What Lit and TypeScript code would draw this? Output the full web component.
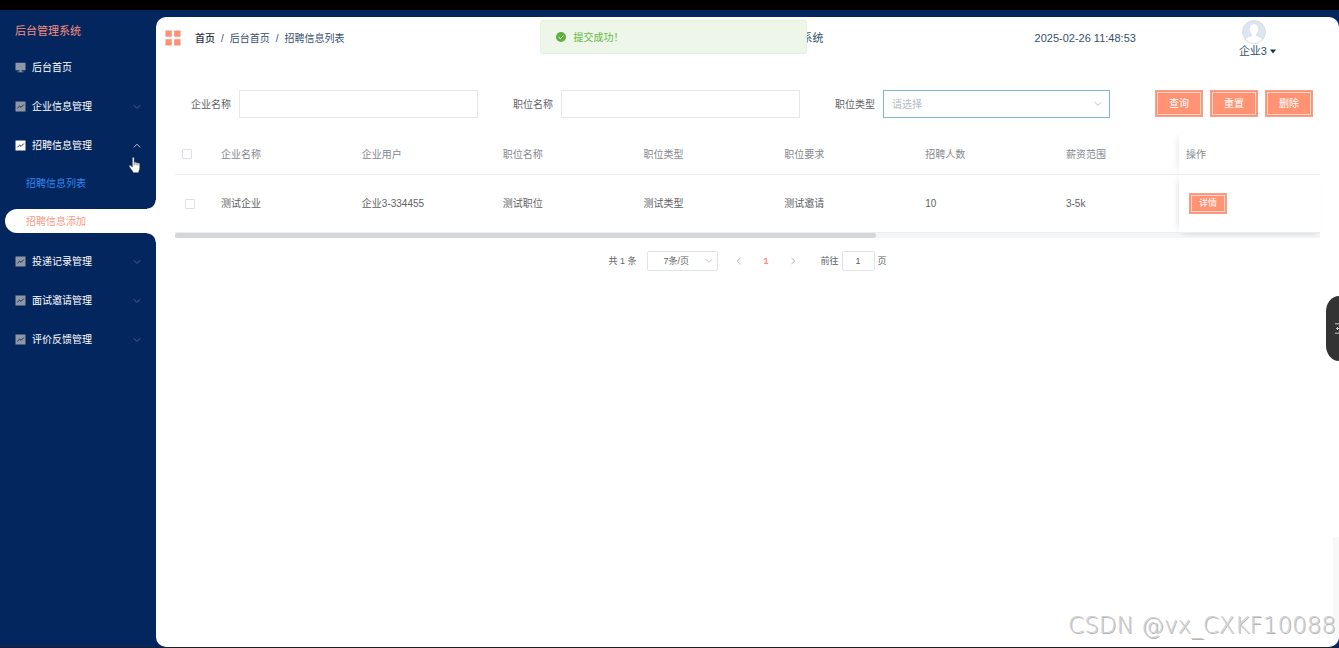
import { LitElement, html, css, svg } from "lit";
import { customElement, state } from "lit/decorators.js";

interface MenuEntry {
  label: string;
  icon: "monitor" | "chart";
  open?: boolean;
  children?: { label: string; active?: boolean }[];
}

const MENU: MenuEntry[] = [
  { label: "后台首页", icon: "monitor" },
  { label: "企业信息管理", icon: "chart", children: [] },
  {
    label: "招聘信息管理",
    icon: "chart",
    open: true,
    children: [{ label: "招聘信息列表" }, { label: "招聘信息添加", active: true }],
  },
  { label: "投递记录管理", icon: "chart", children: [] },
  { label: "面试邀请管理", icon: "chart", children: [] },
  { label: "评价反馈管理", icon: "chart", children: [] },
];

const COLUMNS = ["企业名称", "企业用户", "职位名称", "职位类型", "职位要求", "招聘人数", "薪资范围"];
const ROWS = [["测试企业", "企业3-334455", "测试职位", "测试类型", "测试邀请", "10", "3-5k"]];

const chevron = (d: string) => html`<svg class="chevron" viewBox="0 0 8 8" width="8" height="8" aria-hidden="true">
  <path d=${d} fill="none" stroke="currentColor" stroke-width="0.9" />
</svg>`;
const DOWN = "M0.8 2.2 L4 5.4 L7.2 2.2";
const UP = "M0.8 5.4 L4 2.2 L7.2 5.4";
const LEFT = "M5.5 0.8 L2.3 4 L5.5 7.2";
const RIGHT = "M2.5 0.8 L5.7 4 L2.5 7.2";

@customElement("side-menu")
export class SideMenu extends LitElement {
  static styles = css`
    :host { display: block; font-size: 10px; color: #fff; }
    .logo { padding: 13px 15px 9px; font-size: 11px; line-height: 16px; font-weight: 400; margin: 0; color: #f98d7c; }
    ul { list-style: none; margin: 0; padding: 0; }
    a { color: inherit; text-decoration: none; }
    .item { display: flex; align-items: center; height: 39px; padding: 0 15px; }
    .item .icon { width: 11px; height: 11px; margin-right: 6px; color: #8f97a5; }
    .item.open .icon { color: #fff; }
    .item .chevron { margin-left: auto; color: #536a92; }
    .item.open .chevron { color: #c5cede; }
    .sub { display: flex; flex-direction: column; padding-bottom: 9px; }
    .sub a { display: block; line-height: 38px; padding-left: 26px; color: #2f86f2; }
    .sub a.active {
      position: relative;
      margin: 6px 0 0 5px;
      padding: 2px 0 0 21px;
      line-height: 22px;
      color: #fb9a85;
      background: #fff;
      border-radius: 12px 0 0 12px;
    }
    .sub a.active::before, .sub a.active::after {
      content: "";
      position: absolute;
      right: 0;
      width: 9px;
      height: 9px;
    }
    .sub a.active::before { bottom: 100%; background: radial-gradient(circle at 0 0, transparent 8px, #fff 9px); }
    .sub a.active::after { top: 100%; background: radial-gradient(circle at 0 100%, transparent 8px, #fff 9px); }
  `;

  private icon(kind: string) {
    return html`<svg class="icon" viewBox="0 0 11 11" aria-hidden="true">
      ${kind === "monitor"
        ? svg`<path d="M0.5 0.8h10v7.4h-10z M4.5 8.2h2v1.4h-2z M2.5 9.4h6v0.9h-6z" fill="currentColor" />`
        : svg`<path d="M0.5 0.5h10v10h-10z" fill="currentColor" />
            <path d="M2.3 7.4 L4.6 5.1 L6.1 6.3 L8.8 3.6" fill="none" stroke="#04265e" stroke-width="0.9" />`}
    </svg>`;
  }

  render() {
    return html`
      <h1 class="logo">后台管理系统</h1>
      <nav>
        <ul>
          ${MENU.map(
            (m) => html`<li>
              <a class="item ${m.open ? "open" : ""}" href="#">
                ${this.icon(m.icon)}<span>${m.label}</span>
                ${m.children ? chevron(m.open ? UP : DOWN) : ""}
              </a>
              ${m.open
                ? html`<div class="sub">
                    ${m.children!.map((c) => html`<a class=${c.active ? "active" : ""} href="#">${c.label}</a>`)}
                  </div>`
                : ""}
            </li>`
          )}
        </ul>
      </nav>
    `;
  }
}

@customElement("app-root")
export class AppRoot extends LitElement {
  @state() private message = "提交成功！";

  static styles = css`
    :host {
      display: block;
      font-family: "Liberation Sans", "Noto Sans CJK SC", sans-serif;
      font-size: 10px;
      line-height: 15px;
      color: #606266;
    }
    * { box-sizing: border-box; }
    input, select, button { font: inherit; color: inherit; margin: 0; }
    .shell {
      position: relative;
      display: grid;
      grid-template-columns: 156px minmax(0, 1fr);
      min-height: 100vh;
      background: #04265e;
      border-top: 10px solid #000;
      border-bottom: 1px solid #1c1f26;
      overflow: hidden;
    }
    .page { margin-top: 7px; background: #fff; border-radius: 10px; }

    .header { display: flex; align-items: center; height: 42px; padding: 0 63px 0 9px; font-size: 11px; color: #35506c; }
    .grid-icon { width: 16px; height: 16px; margin-right: 14px; }
    .crumbs { display: flex; align-items: baseline; gap: 6px; font-size: 10px; }
    .crumbs a { color: inherit; text-decoration: none; }
    .crumbs .home { color: #1f3247; font-weight: 500; }
    .title { margin-left: auto; }
    .time { margin-left: 19%; }
    .user { display: flex; flex-direction: column; margin-left: 103px; padding: 0; border: 0; background: none; }
    .user .avatar { width: 26px; height: 26px; margin-left: 2px; }
    .user .name { display: flex; align-items: center; gap: 3px; line-height: 12px; }

    .content { padding: 31px 19px 0; }
    .search { display: flex; gap: 35px; padding: 0 7px 0 16px; }
    .field { display: flex; align-items: center; gap: 8px; flex: 287 1 0; min-width: 0; }
    .field.type { flex-grow: 275; }
    .field label { flex: none; }
    .field input, .field select {
      width: 100%;
      min-width: 0;
      height: 28px;
      padding: 0 8px;
      border: 1px solid #e4e8eb;
      border-radius: 0;
      background: #fff;
      outline: 0;
    }
    .picker { position: relative; flex: 1; min-width: 0; display: flex; }
    .picker select { appearance: none; width: 100%; background: #fff; outline: 0; }
    .picker .chevron { position: absolute; right: 8px; top: 50%; margin-top: -4px; color: #b4bac4; pointer-events: none; }
    .field .picker select { border-color: #7db7dd; color: #b4bac4; }
    .actions { display: flex; gap: 7px; margin-left: 10px; }
    .btn {
      width: 48px;
      height: 27px;
      padding: 0;
      border: 1px solid #f5a08b;
      background: #ff9374;
      color: #fff;
      outline: 1px solid #ffd3c6;
      outline-offset: -3px;
    }
    .btn.small { width: 38px; height: 21px; font-size: 9px; }

    .table { width: 100%; margin-top: 16px; border-collapse: separate; border-spacing: 0; table-layout: fixed; }
    .table th, .table td { padding: 0 7px; text-align: left; font-weight: 400; border-bottom: 1px solid #ebeef3; }
    .table th { height: 41px; color: #85888e; }
    .table td { height: 58px; }
    .col-check { width: 39px; }
    .col-data { width: 12.3%; }
    .col-op { width: 141px; }
    .table td:first-child { padding-left: 10px; }
    .table .op { position: relative; background: #fff; box-shadow: -5px 0 7px -4px rgba(0, 0, 0, 0.1); }
    .table td.op { padding-left: 10px; box-shadow: -5px 0 7px -4px rgba(0, 0, 0, 0.1), 0 4px 5px -3px rgba(0, 0, 0, 0.1); }
    .check {
      appearance: none;
      display: block;
      width: 10px;
      height: 10px;
      border: 1px solid #dcdfe6;
      border-radius: 1px;
      background: #fff;
    }
    .track { height: 5px; background: #f4f5f7; }
    .thumb { width: 61.2%; height: 5px; border-radius: 3px; background: #d5d6d9; }

    .pager { display: flex; justify-content: center; align-items: center; height: 20px; margin-top: 13px; font-size: 9px; }
    .pager .picker { flex: none; width: 71px; margin: 0 7px 0 11px; }
    .pager .picker select { height: 20px; padding: 0 0 0 15px; border: 1px solid #e0e3e9; border-radius: 2px; }
    .pager .picker .chevron { right: 5px; }
    .pager button { display: flex; align-items: center; justify-content: center; width: 27px; height: 20px; padding: 0; border: 0; background: none; color: #a9aeb8; }
    .pager .current { color: #f98c74; font-weight: 700; }
    .pager .goto { display: flex; align-items: center; gap: 3px; margin-left: 14px; }
    .pager input { width: 33px; height: 20px; padding: 0; text-align: center; border: 1px solid #e0e3e9; border-radius: 2px; outline: 0; }

    .toast {
      position: absolute;
      top: 10px;
      left: calc(40% + 4px);
      width: 20%;
      height: 34px;
      display: flex;
      align-items: center;
      gap: 8px;
      padding-left: 15px;
      border: 1px solid #e1f3d8;
      border-radius: 3px;
      background: #edf6e8;
      color: #67b944;
    }
    .dock {
      position: absolute;
      right: 0;
      top: 286px;
      width: 13px;
      height: 65px;
      display: flex;
      align-items: center;
      justify-content: flex-end;
      background: #333;
      border-radius: 20px 0 0 20px / 24px 0 0 24px;
    }
    .rail { position: absolute; right: 0; bottom: 8px; width: 6px; height: 102px; background: #f8f8f8; }
    .watermark {
      position: absolute;
      right: 3px;
      bottom: 4px;
      font-family: "DejaVu Sans", sans-serif;
      font-weight: 200;
      font-size: 23px;
      line-height: 36px;
      color: #d0d0d0;
      text-shadow: 1px 1px 0 #b4b4b4;
      white-space: nowrap;
    }
    .pointer { position: absolute; left: 128px; top: 147px; width: 14px; height: 17px; }
  `;

  render() {
    return html`
      <div class="shell">
        <side-menu></side-menu>
        <main class="page">
          <header class="header">
            <svg class="grid-icon" viewBox="0 0 16 16" aria-hidden="true">
              <path d="M0.5 0.5h6.3v6.3h-6.3z M9.2 0.5h6.3v6.3h-6.3z M0.5 9.2h6.3v6.3h-6.3z M9.2 9.2h6.3v6.3h-6.3z" fill="#fd8f74" />
            </svg>
            <nav class="crumbs">
              <a class="home" href="#">首页</a><span>/</span><a href="#">后台首页</a><span>/</span><span>招聘信息列表</span>
            </nav>
            <span class="title">招聘系统</span>
            <time class="time">2025-02-26 11:48:53</time>
            <button class="user" type="button">
              <svg class="avatar" viewBox="0 0 26 26" aria-hidden="true">
                <defs><clipPath id="round"><circle cx="13" cy="13" r="11" /></clipPath></defs>
                <circle cx="13" cy="13" r="11.5" fill="#dde5f2" stroke="#dcdcdf" />
                <g clip-path="url(#round)" fill="#fff">
                  <ellipse cx="13" cy="10.3" rx="4.2" ry="5.3" />
                  <path d="M11 14h4v3c3 1 6 2 6.500 4v5h-17v-5c0.500-2 3.500-3 6.500-4z" />
                </g>
              </svg>
              <span class="name">企业3
                <svg viewBox="0 0 6 5" width="6" height="5" aria-hidden="true"><path d="M0 0.500h6L3 4.500z" fill="#1f3247" /></svg>
              </span>
            </button>
          </header>

          <section class="content">
            <form class="search">
              <div class="field"><label for="company">企业名称</label><input id="company" type="text" /></div>
              <div class="field"><label for="job">职位名称</label><input id="job" type="text" /></div>
              <div class="field type">
                <label for="type">职位类型</label>
                <div class="picker">
                  <select id="type"><option>请选择</option></select>
                  ${chevron(DOWN)}
                </div>
              </div>
              <div class="actions">
                <button class="btn" type="button">查询</button>
                <button class="btn" type="button">重置</button>
                <button class="btn" type="button">删除</button>
              </div>
            </form>

            <table class="table">
              <colgroup>
                <col class="col-check" />
                ${COLUMNS.map((_, i) => html`<col class=${i < COLUMNS.length - 1 ? "col-data" : ""} />`)}
                <col class="col-op" />
              </colgroup>
              <thead>
                <tr>
                  <th><input class="check" type="checkbox" aria-label="全选" /></th>
                  ${COLUMNS.map((c) => html`<th>${c}</th>`)}
                  <th class="op">操作</th>
                </tr>
              </thead>
              <tbody>
                ${ROWS.map(
                  (r) => html`<tr>
                    <td><input class="check" type="checkbox" aria-label=${r[0]} /></td>
                    ${r.map((v) => html`<td>${v}</td>`)}
                    <td class="op"><button class="btn small" type="button">详情</button></td>
                  </tr>`
                )}
              </tbody>
            </table>
            <div class="track"><div class="thumb"></div></div>

            <div class="pager">
              <span>共 1 条</span>
              <div class="picker">
                <select aria-label="每页条数"><option>7条/页</option></select>
                ${chevron(DOWN)}
              </div>
              <button type="button" aria-label="上一页">${chevron(LEFT)}</button>
              <button type="button" class="current">1</button>
              <button type="button" aria-label="下一页">${chevron(RIGHT)}</button>
              <div class="goto">
                <label for="goto">前往</label><input id="goto" type="text" .value=${"1"} /><span>页</span>
              </div>
            </div>
          </section>
        </main>

        <div class="toast" role="status">
          <svg viewBox="0 0 10 10" width="10" height="10" aria-hidden="true">
            <circle cx="5" cy="5" r="5" fill="#5cb13a" />
            <path d="M2.7 5.1 L4.4 6.7 L7.4 3.700" fill="none" stroke="#fff" stroke-width="1" />
          </svg>
          <span>${this.message}</span>
        </div>
        <div class="rail"></div>
        <div class="dock">
          <svg viewBox="0 0 4 11" width="4" height="11" aria-hidden="true">
            <path d="M0 0.800h4 M0 10.200h4 M1 5.500h3 M2.500 4v3" fill="none" stroke="#ccc" stroke-width="1" />
          </svg>
        </div>
        <svg class="pointer" viewBox="0 0 14 17" aria-hidden="true">
          <path d="M4.300 1.200c0-1.200 1.900-1.200 1.900 0v4.300c.4-.7 1.700-.5 1.900.2.500-.5 1.600-.3 1.800.5.600-.5 1.900-.2 1.900.9v3.600c0 2-1 2.700-1.200 5.100H5.200C4.500 13.500 2.500 12 1.300 9.600c-.6-1.200.6-1.900 1.500-1l1.500 1.500z" fill="#fff" stroke="#1a2233" stroke-width="0.500" />
          <path d="M6.200 5.500v2.800M8.100 5.800v2.500M9.900 6.300v2.200" stroke="#444" stroke-width="0.600" />
        </svg>
        <div class="watermark">CSDN @vx_CXKF10088</div>
      </div>
    `;
  }
}
